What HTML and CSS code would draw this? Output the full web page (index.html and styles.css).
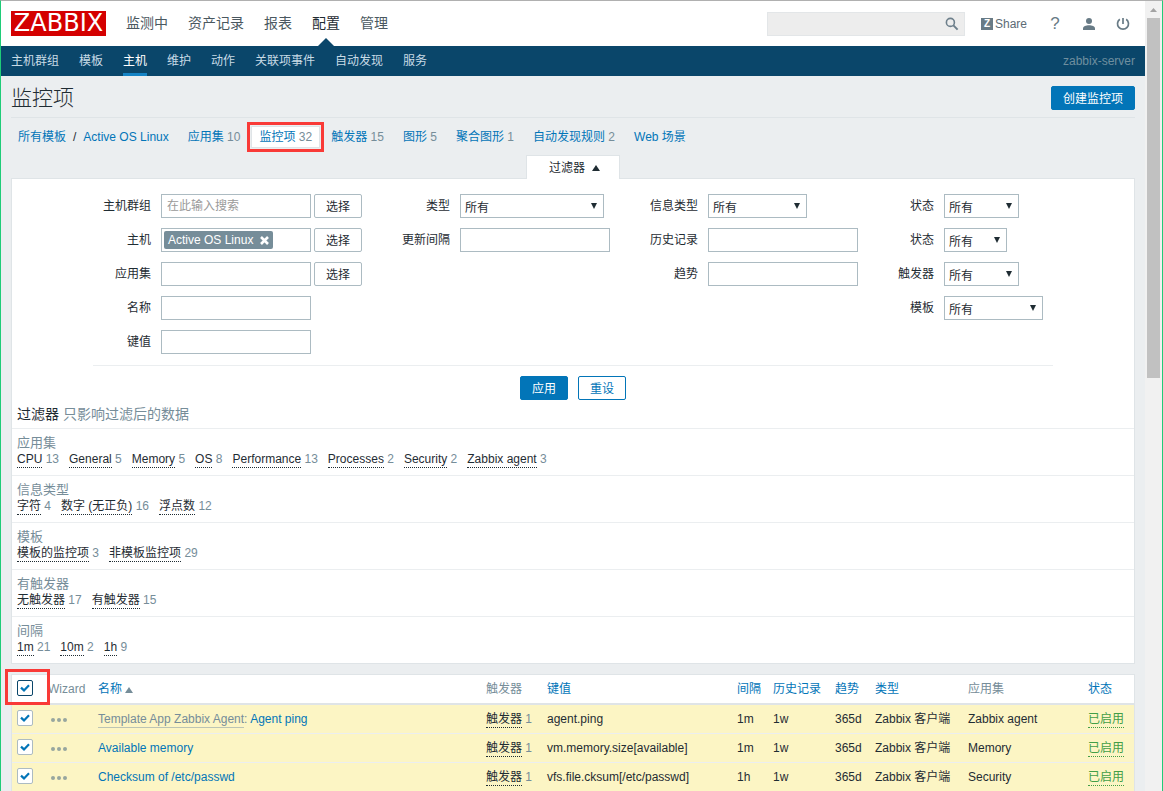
FILE: index.html
```html
<!DOCTYPE html>
<html lang="zh-CN">
<head>
<meta charset="utf-8">
<title>监控项</title>
<link rel="stylesheet" href="styles.css">
</head>
<body>
<div class="window">
<div class="page">
  <header class="top">
    <a class="logo" href="#">ZABBIX</a>
    <nav class="menu">
      <a href="#">监测中</a><a href="#">资产记录</a><a href="#">报表</a><a href="#" class="selected">配置</a><a href="#">管理</a>
    </nav>
    <form class="search">
      <input type="text" aria-label="搜索">
      <button type="button" aria-label="搜索"><svg width="14" height="14" viewBox="0 0 14 14"><circle cx="5.4" cy="5.4" r="4" fill="none" stroke="currentColor" stroke-width="1.6"/><path d="M8.4 8.4 12.6 12.6" stroke="currentColor" stroke-width="2"/></svg></button>
    </form>
    <a class="share" href="#"><span class="share-mark">Z</span>Share</a>
    <a class="icon help" href="#">?</a>
    <a class="icon" href="#" aria-label="用户"><svg width="12" height="12" viewBox="0 0 12 12"><circle cx="6" cy="3" r="3" fill="currentColor"/><path d="M0 12v-1.6C0 8.2 3 7.2 6 7.2s6 1 6 3.2V12z" fill="currentColor"/></svg></a>
    <a class="icon" href="#" aria-label="退出"><svg width="14" height="14" viewBox="0 0 14 14" fill="none" stroke="currentColor" stroke-width="1.7"><path d="M7 1v6M3.8 2.2a5.5 5.5 0 1 0 6.4 0"/></svg></a>
  </header>
  <nav class="submenu">
    <a href="#">主机群组</a><a href="#">模板</a><a href="#" class="selected">主机</a><a href="#">维护</a><a href="#">动作</a><a href="#">关联项事件</a><a href="#">自动发现</a><a href="#">服务</a>
    <span class="server">zabbix-server</span>
  </nav>
  <main>
    <div class="title-bar">
      <h1>监控项</h1>
      <button type="button" class="btn primary">创建监控项</button>
    </div>
    <nav class="crumbs">
      <span class="path"><a href="#">所有模板</a><span>/</span><a href="#">Active OS Linux</a></span>
      <span><a href="#">应用集</a> <sup>10</sup></span>
      <span class="current"><a href="#">监控项</a> <sup>32</sup></span>
      <span><a href="#">触发器</a> <sup>15</sup></span>
      <span><a href="#">图形</a> <sup>5</sup></span>
      <span><a href="#">聚合图形</a> <sup>1</sup></span>
      <span><a href="#">自动发现规则</a> <sup>2</sup></span>
      <span><a href="#">Web 场景</a></span>
    </nav>
    <div class="tab-row"><button type="button" class="filter-tab">过滤器<svg width="8" height="6" viewBox="0 0 8 6"><path d="M4 0 8 6H0z" fill="currentColor"/></svg></button></div>
    <section class="panel">
      <form class="filter">
        <div class="fields">
          <div class="col">
            <label for="groups">主机群组</label>
            <div class="field"><input id="groups" type="text" placeholder="在此输入搜索"><button type="button" class="btn plain">选择</button></div>
            <label for="hosts">主机</label>
            <div class="field"><div class="multi"><span class="tag">Active OS Linux<button type="button" aria-label="移除"><svg width="9" height="9" viewBox="0 0 9 9"><path d="M1 1 8 8M8 1 1 8" stroke="currentColor" stroke-width="2.6"/></svg></button></span><input id="hosts" type="text"></div><button type="button" class="btn plain">选择</button></div>
            <label for="app">应用集</label>
            <div class="field"><input id="app" type="text"><button type="button" class="btn plain">选择</button></div>
            <label for="name">名称</label>
            <div class="field"><input id="name" type="text"></div>
            <label for="key">键值</label>
            <div class="field"><input id="key" type="text"></div>
          </div>
          <div class="col">
            <label for="type">类型</label>
            <div class="field"><select id="type" class="w-xl"><option>所有</option></select></div>
            <label for="delay">更新间隔</label>
            <div class="field"><input id="delay" type="text"></div>
          </div>
          <div class="col">
            <label for="info">信息类型</label>
            <div class="field"><select id="info" class="w-l"><option>所有</option></select></div>
            <label for="history">历史记录</label>
            <div class="field"><input id="history" type="text"></div>
            <label for="trends">趋势</label>
            <div class="field"><input id="trends" type="text"></div>
          </div>
          <div class="col">
            <label for="state">状态</label>
            <div class="field"><select id="state" class="w-m"><option>所有</option></select></div>
            <label for="status">状态</label>
            <div class="field"><select id="status" class="w-s"><option>所有</option></select></div>
            <label for="trig">触发器</label>
            <div class="field"><select id="trig" class="w-m"><option>所有</option></select></div>
            <label for="tpl">模板</label>
            <div class="field"><select id="tpl" class="w-l"><option>所有</option></select></div>
          </div>
        </div>
        <div class="actions">
          <button type="button" class="btn primary">应用</button>
          <button type="button" class="btn outline">重设</button>
        </div>
      </form>
      <h2>过滤器 <span>只影响过滤后的数据</span></h2>
      <div class="sub"><h3>应用集</h3><p><span><a href="#">CPU</a> 13</span><span><a href="#">General</a> 5</span><span><a href="#">Memory</a> 5</span><span><a href="#">OS</a> 8</span><span><a href="#">Performance</a> 13</span><span><a href="#">Processes</a> 2</span><span><a href="#">Security</a> 2</span><span><a href="#">Zabbix agent</a> 3</span></p></div>
      <div class="sub"><h3>信息类型</h3><p><span><a href="#">字符</a> 4</span><span><a href="#">数字 (无正负)</a> 16</span><span><a href="#">浮点数</a> 12</span></p></div>
      <div class="sub"><h3>模板</h3><p><span><a href="#">模板的监控项</a> 3</span><span><a href="#">非模板监控项</a> 29</span></p></div>
      <div class="sub"><h3>有触发器</h3><p><span><a href="#">无触发器</a> 17</span><span><a href="#">有触发器</a> 15</span></p></div>
      <div class="sub"><h3>间隔</h3><p><span><a href="#">1m</a> 21</span><span><a href="#">10m</a> 2</span><span><a href="#">1h</a> 9</span></p></div>
    </section>
    <table class="list">
      <colgroup><col class="c-check"><col class="c-wizard"><col><col class="c-trig"><col class="c-key"><col class="c-int"><col class="c-hist"><col class="c-trend"><col class="c-type"><col class="c-app"><col class="c-status"></colgroup>
      <thead>
        <tr><th class="marked"><input type="checkbox" class="focused" aria-label="全选" checked></th><th>Wizard</th><th><a href="#">名称<svg class="sort" width="8" height="6" viewBox="0 0 8 6"><path d="M4 0 8 6H0z" fill="currentColor"/></svg></a></th><th>触发器</th><th><a href="#">键值</a></th><th><a href="#">间隔</a></th><th><a href="#">历史记录</a></th><th><a href="#">趋势</a></th><th><a href="#">类型</a></th><th>应用集</th><th><a href="#">状态</a></th></tr>
      </thead>
      <tbody>
        <tr><td><input type="checkbox" aria-label="Agent ping" checked></td><td><button type="button" class="dots" aria-label="Wizard"><i></i><i></i><i></i></button></td><td><a href="#" class="tpl">Template App Zabbix Agent</a><span class="grey">:</span> <a href="#">Agent ping</a></td><td><a href="#" class="dotted">触发器</a> <span class="grey">1</span></td><td>agent.ping</td><td>1m</td><td>1w</td><td>365d</td><td>Zabbix 客户端</td><td>Zabbix agent</td><td><a href="#" class="dotted on">已启用</a></td></tr>
        <tr><td><input type="checkbox" aria-label="Available memory" checked></td><td><button type="button" class="dots" aria-label="Wizard"><i></i><i></i><i></i></button></td><td><a href="#">Available memory</a></td><td><a href="#" class="dotted">触发器</a> <span class="grey">1</span></td><td>vm.memory.size[available]</td><td>1m</td><td>1w</td><td>365d</td><td>Zabbix 客户端</td><td>Memory</td><td><a href="#" class="dotted on">已启用</a></td></tr>
        <tr><td><input type="checkbox" aria-label="Checksum of /etc/passwd" checked></td><td><button type="button" class="dots" aria-label="Wizard"><i></i><i></i><i></i></button></td><td><a href="#">Checksum of /etc/passwd</a></td><td><a href="#" class="dotted">触发器</a> <span class="grey">1</span></td><td>vfs.file.cksum[/etc/passwd]</td><td>1h</td><td>1w</td><td>365d</td><td>Zabbix 客户端</td><td>Security</td><td><a href="#" class="dotted on">已启用</a></td></tr>
      </tbody>
    </table>
  </main>
</div>
<div class="scrollbar"><svg width="7" height="4" viewBox="0 0 7 4"><path d="M3.5 0 7 4H0z" fill="#a3a3a3"/></svg><div class="thumb"></div></div>
</div>
</body>
</html>
```
FILE: styles.css
```css
*, *::after { box-sizing: border-box; }
body {
  margin: 0;
  color: #1f2c33;
  background: #ebeef0;
  font: 12px/16px "Liberation Sans", "Noto Sans CJK SC", sans-serif;
}
button, input, select { font: inherit; color: inherit; margin: 0; }
button { padding: 0; border: 0; background: none; cursor: pointer; }
a { color: #0275b8; text-decoration: none; }
svg { display: block; }

.window {
  display: flex;
  height: 100vh;
  overflow: hidden;
  border: solid #1fcc78;
  border-width: 0 1px;
  border-top: 1px solid #b0b0b0;
}
.page { flex: 1; min-width: 0; background: #ebeef0; }

.scrollbar {
  width: 17px;
  padding: 7px 2px 0 2px;
  display: flex;
  flex-direction: column;
  align-items: center;
  gap: 6px;
  background: #f1f1f1;
}
.thumb { width: 100%; height: 46%; background: #c1c1c1; }

.top {
  display: flex;
  align-items: center;
  height: 45px;
  padding: 0 12px 0 10px;
  background: #fff;
}
.logo {
  width: 95px;
  background: #d40000;
  color: #fff;
  font: 24px/25px "DejaVu Sans", sans-serif;
  text-align: center;
}
.menu { display: flex; gap: 20px; margin-left: 20px; flex: 1; font-size: 14px; line-height: 45px; }
.menu a { color: #4a5860; }
.menu .selected { position: relative; color: #1f2c33; }
.menu .selected::after {
  content: "";
  position: absolute;
  left: 50%;
  bottom: 0;
  margin-left: -8px;
  border: solid transparent;
  border-width: 0 8px 8px;
  border-bottom-color: #0a466a;
}
.search { display: flex; width: 198px; height: 24px; background: #ededed; border: 1px solid #e3e6e8; }
.search input { flex: 1; min-width: 0; border: 0; background: none; outline: 0; }
.search button { padding: 0 5px; color: #6d7f8b; }
.share { display: flex; align-items: center; gap: 2px; margin: 0 18px 0 16px; color: #5c6b75; }
.share-mark { width: 12px; background: #687b86; color: #fff; font: bold 10px/12px "Liberation Sans", sans-serif; text-align: center; }
.icon { display: flex; justify-content: center; width: 20px; margin-left: 14px; color: #687b86; }
.share + .icon { margin-left: 0; }
.help { font-size: 17px; }

.submenu { display: flex; gap: 20px; height: 30px; padding: 0 10px; background: #0a466a; line-height: 30px; }
.submenu a { color: #c8dbe6; }
.submenu .selected { color: #fff; border-bottom: 3px solid #1483c5; }
.server { margin-left: auto; color: #6f8f9f; }

main { padding: 0 10px; }
.title-bar { display: flex; align-items: center; justify-content: space-between; height: 42px; padding-top: 3px; border-bottom: 1px solid #dfe4e7; }
h1 { margin: 0; font-size: 21px; line-height: 38px; font-weight: 300; }
.btn { height: 24px; padding: 2px 11px 0; border: 1px solid #0275b8; border-radius: 2px; line-height: 20px; }
.primary { background: #0275b8; color: #fff; }
.outline { background: #fff; color: #0275b8; }
.plain { background: #fff; border-color: #acbbc2; }

.crumbs { display: flex; align-items: center; gap: 3px; height: 37px; }
.crumbs > span { padding: 0 7px; line-height: 20px; border: 1px solid transparent; white-space: nowrap; }
.crumbs > .path { display: flex; gap: 7px; padding-left: 6px; }
.crumbs sup { font-size: 12px; line-height: 1; vertical-align: baseline; color: #768d99; }
.crumbs > .current { position: relative; background: #fff; border-color: #dfe4e7; }
.current::after {
  content: "";
  position: absolute;
  inset: -5px;
  border: 3px solid #f93a37;
}

.tab-row { display: flex; justify-content: center; }
.filter-tab {
  position: relative;
  display: flex;
  align-items: center;
  justify-content: center;
  gap: 7px;
  width: 94px;
  height: 24px;
  padding-left: 3px;
  margin-bottom: -1px;
  border: 1px solid #dfe4e7;
  border-bottom: 0;
  background: #fff;
}
.panel { background: #fff; border: 1px solid #dfe4e7; }
.filter { width: 960px; max-width: 100%; margin: 0 auto; }
.fields {
  display: flex;
  justify-content: space-between;
  padding: 15px 10px 11px;
  border-bottom: 1px solid #ebeef0;
}
.col { display: grid; grid-template-columns: auto auto; gap: 10px; align-content: start; }
.col label { line-height: 24px; text-align: right; }
.field { display: flex; gap: 3px; height: 24px; }
.field input[type="text"], .multi, select { width: 150px; border: 1px solid #acbbc2; background-color: #fff; outline: 0; border-radius: 0; }
.field input[type="text"] { padding: 0 5px; }
.field input::placeholder { color: #9a9a9a; }
.multi { display: flex; padding: 2px; }
.field .multi input[type="text"] { flex: 1; width: auto; min-width: 0; border: 0; padding: 0; }
.tag { display: flex; align-items: center; gap: 7px; padding: 0 4px; border-radius: 2px; background: #768d99; color: #fff; white-space: nowrap; }
.tag button { color: #fff; }
select {
  appearance: none;
  padding: 4px 4px 0;
  background: url("data:image/svg+xml,%3Csvg xmlns='http://www.w3.org/2000/svg' width='6' height='6'%3E%3Cpath d='M0 0h6L3 6z' fill='%231f2c33'/%3E%3C/svg%3E") no-repeat right 6px top 8px;
}
.w-s { width: 63px; }
.w-m { width: 75px; }
.w-l { width: 99px; }
.w-xl { width: 144px; }
.actions { display: flex; justify-content: center; gap: 10px; padding: 10px 0 2px; }

h2 { margin: 0; padding: 0 5px 2px; font-size: 14px; line-height: 24px; font-weight: 400; }
h2 span, h3 { color: #768d99; }
.sub { height: 47px; padding: 5px 5px 0; border-top: 1px solid #ebeef0; }
h3 { margin: 0; font-size: 13px; line-height: 17px; font-weight: 400; }
.sub p { display: flex; gap: 10px; margin: 0; color: #768d99; }
.sub a, .dotted { display: inline-block; color: #1f2c33; line-height: 15px; border-bottom: 1px dotted #1f2c33; }

.list {
  width: 100%;
  margin-top: 10px;
  table-layout: fixed;
  border-spacing: 0;
  border: 1px solid #dfe4e7;
  background: #fff;
}
.c-check { width: 31px; }
.c-wizard { width: 50px; }
.c-trig { width: 61px; }
.c-key { width: 190px; }
.c-int { width: 36px; }
.c-hist { width: 62px; }
.c-trend { width: 40px; }
.c-type { width: 93px; }
.c-app { width: 120px; }
.c-status { width: 51px; }
.list th, .list td { padding: 0 5px; text-align: left; font-weight: 400; white-space: nowrap; vertical-align: middle; }
.list th { height: 30px; color: #768d99; border-bottom: 2px solid #dfe4e7; }
.list td { height: 29px; background: #fcf5c4; border-bottom: 1px solid #ebeef0; }
.list .marked { position: relative; }
.marked::after {
  content: "";
  position: absolute;
  left: -7px;
  top: -6px;
  width: 45px;
  height: 36px;
  border: 3px solid #f93a37;
  pointer-events: none;
}
.list input {
  display: block;
  appearance: none;
  width: 16px;
  height: 16px;
  margin-bottom: 2px;
  border: 1px solid #acbbc2;
  border-radius: 2px;
  background: #fff url("data:image/svg+xml,%3Csvg xmlns='http://www.w3.org/2000/svg' width='10' height='8'%3E%3Cpath d='M1 3.6 4 6.4 9 1.2' fill='none' stroke='%230275b8' stroke-width='2.2'/%3E%3C/svg%3E") no-repeat center;
}
.list input.focused { border-color: #0a466a; }
.sort { display: inline-block; margin-left: 3px; color: #768d99; }
.grey { color: #768d99; }
.list .tpl { display: inline-block; line-height: 15px; color: #768d99; border-bottom: 1px solid #bcc4b4; }
.list .on { color: #429e47; border-color: #429e47; }
.dots { display: flex; gap: 2px; margin: 2px 0 0 3px; }
.dots i { width: 4px; height: 4px; border-radius: 50%; background: #97a69f; }
```
